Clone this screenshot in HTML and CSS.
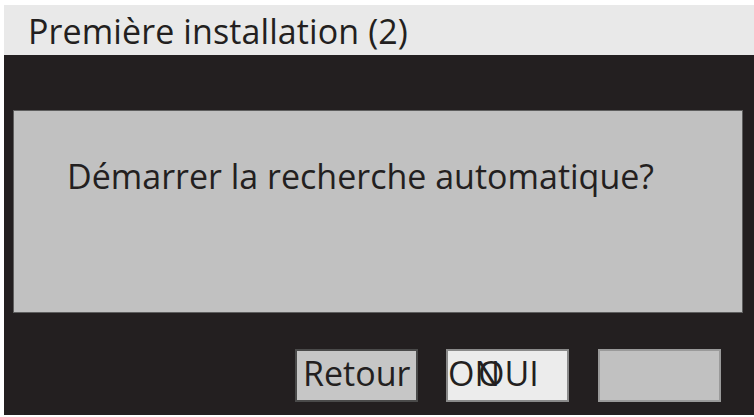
FILE: index.html
```html
<!DOCTYPE html>
<html lang="fr">
<head>
<meta charset="utf-8">
<title>Première installation (2)</title>
<link rel="stylesheet" href="styles.css">
</head>
<body>
<div class="screen">
  <div class="title">Première installation (2)</div>
  <div class="main">
    <div class="panel">
      <p class="question">Démarrer la recherche automatique?</p>
    </div>
    <div class="buttons">
      <div class="btn btn-back">Retour</div>
      <div class="btn btn-yes"><span class="ghost">ON</span><span>OUI</span></div>
      <div class="btn btn-empty"></div>
    </div>
  </div>
</div>
</body>
</html>
```

FILE: styles.css
```css
html, body {
  margin: 0;
  padding: 0;
  background: #ffffff;
}

body {
  font-family: "Open Sans", "Noto Sans", sans-serif;
  color: #231f20;
  width: 754px;
  height: 417px;
  overflow: hidden;
}

.screen {
  padding: 5px 0 0 4px;
}

.title {
  height: 50px;
  box-sizing: border-box;
  padding: 2px 0 0 24px;
  background: #e9e9e9;
  font-size: 34px;
  line-height: 48px;
  letter-spacing: 0.1px;
  white-space: nowrap;
}

.main {
  height: 360px;
  box-sizing: border-box;
  background: #231f20;
  padding: 55px 11px 0 9px;
}

.panel {
  height: 203px;
  box-sizing: border-box;
  border: 1px solid #5e5e5e;
  background: #c1c1c1;
  padding: 42px 0 0 53px;
}

.question {
  margin: 0;
  font-size: 34px;
  line-height: 46px;
  white-space: nowrap;
}

.buttons {
  display: flex;
  margin-top: 36px;
  padding-left: 282px;
  gap: 28px;
}

.btn {
  width: 123px;
  height: 53px;
  box-sizing: border-box;
  font-size: 34px;
  line-height: 45px;
  white-space: nowrap;
  display: flex;
}

.btn-back {
  background: #c6c6c6;
  border: 2px solid #4a4a4a;
  padding-left: 6px;
}

.btn-yes {
  background: #ececec;
  border: 2px solid #8a8a8a;
  padding-left: 0;
}

.ghost {
  display: inline-block;
  width: 30px;
}

.btn-empty {
  margin-left: 1px;
  background: #c1c1c1;
  border: 2px solid #9a9a9a;
}
```
